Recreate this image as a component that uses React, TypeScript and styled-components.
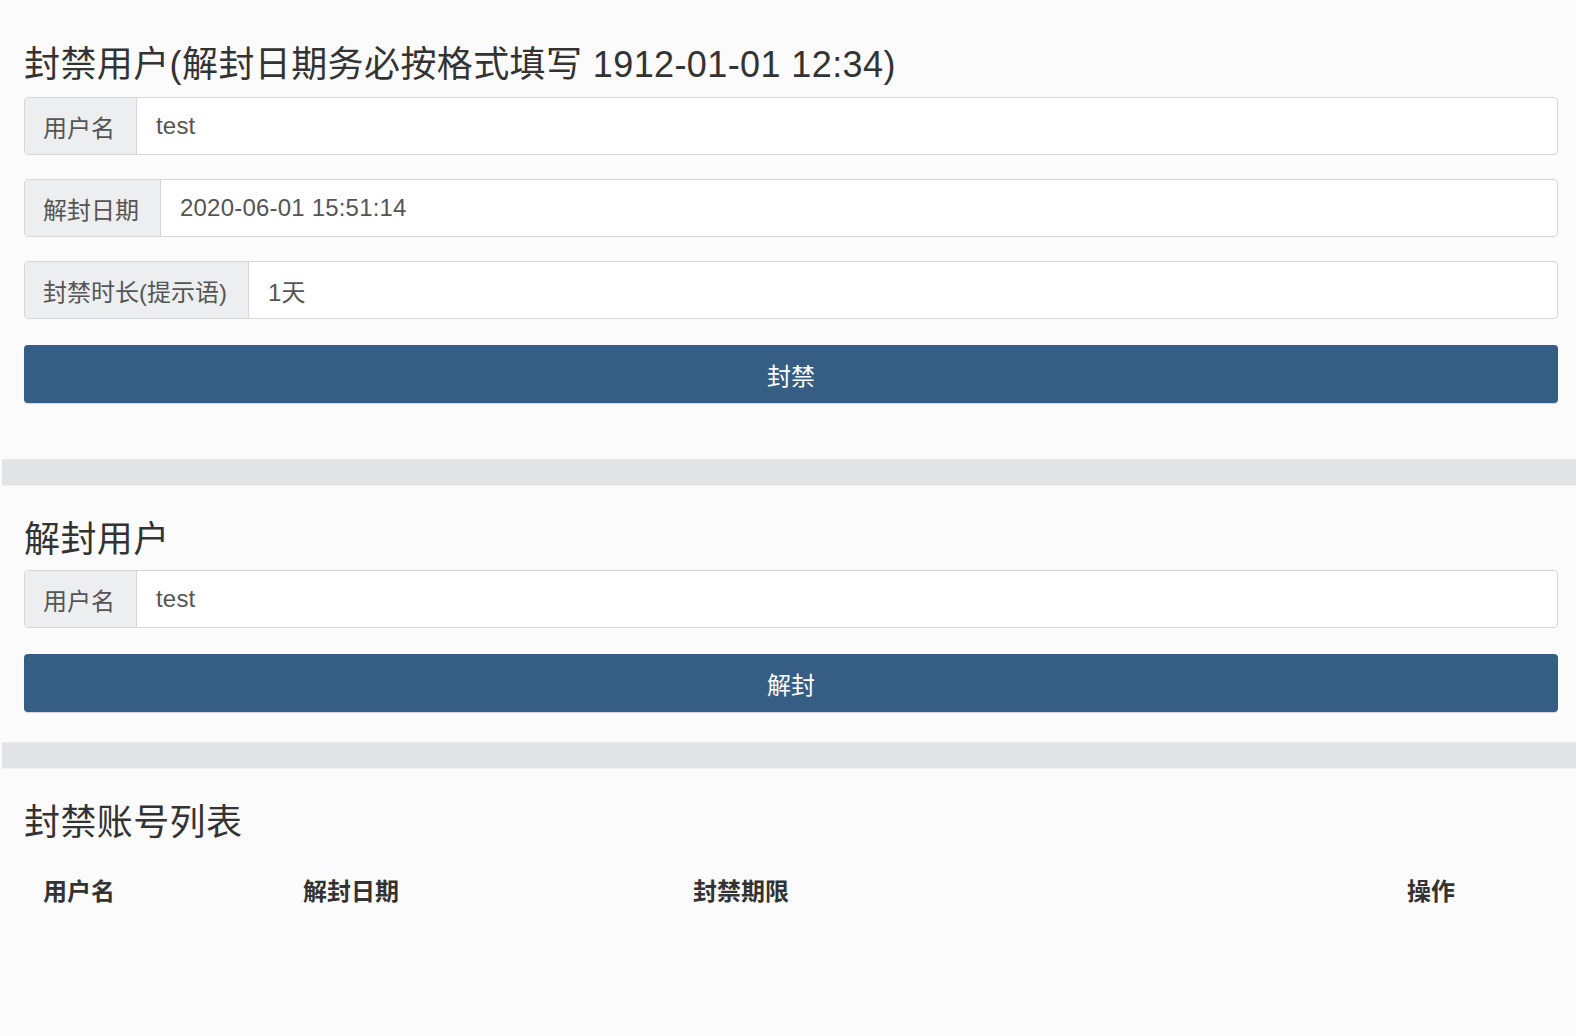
import React from "react";
import styled, { createGlobalStyle } from "styled-components";

const GlobalStyle = createGlobalStyle`
  html, body {
    margin: 0;
    padding: 0;
    background: #fbfbfb;
  }
  body {
    font-family: "Liberation Sans", "Noto Sans CJK SC", sans-serif;
    color: #333;
  }
  * { box-sizing: border-box; }
`;

const Page = styled.div`
  width: 1576px;
  min-height: 1036px;
  background: #fbfbfb;
  display: flex;
  flex-direction: column;
`;

const Section = styled.section<{ $top: number; $bottom: number }>`
  padding: ${(p) => p.$top}px 18px ${(p) => p.$bottom}px 24px;
  display: flex;
  flex-direction: column;
`;

const Separator = styled.div`
  height: 27px;
  background: #e2e4e6;
  border-top: 1px solid #e9eaec;
  border-bottom: 1px solid #eef0f1;
  margin-left: 2px;
`;

const Title = styled.h2<{ $gap?: number }>`
  margin: 0 0 ${(p) => p.$gap ?? 12}px 0;
  font-size: 36px;
  line-height: 40px;
  font-weight: 400;
  color: #333;
  letter-spacing: 0.4px;
  white-space: nowrap;
`;

const Fields = styled.div`
  display: flex;
  flex-direction: column;
  gap: 24px;
`;

const InputGroup = styled.div`
  display: flex;
  height: 58px;
  border: 1px solid #d6d6d6;
  border-radius: 4px;
  background: #fff;
  overflow: hidden;
`;

const Addon = styled.span`
  display: flex;
  align-items: center;
  padding: 0 21px 0 18px;
  background: #eceeef;
  border-right: 1px solid #d6d6d6;
  color: #555;
  font-size: 24px;
  white-space: nowrap;
`;

const Value = styled.span`
  display: flex;
  align-items: center;
  flex: 1;
  padding: 0 19px;
  color: #555;
  font-size: 24px;
  letter-spacing: 0.2px;
`;

const Button = styled.button`
  margin-top: 26px;
  height: 58px;
  width: 100%;
  border: none;
  border-radius: 4px;
  background: #365d84;
  color: #fff;
  font-family: inherit;
  font-size: 24px;
  box-shadow: 0 1px 1px rgba(0, 0, 0, 0.15);
  cursor: pointer;
`;

const Table = styled.div`
  display: grid;
  grid-template-columns: 260px 390px 714px 1fr;
  margin-top: 22px;
`;

const HeadCell = styled.div`
  padding: 12px 19px;
  font-size: 24px;
  line-height: 30px;
  font-weight: 700;
  color: #333;
`;

type Field = { label: string; value: string };

const Row = ({ label, value }: Field) => (
  <InputGroup>
    <Addon>{label}</Addon>
    <Value>{value}</Value>
  </InputGroup>
);

export default function App() {
  const banFields: Field[] = [
    { label: "用户名", value: "test" },
    { label: "解封日期", value: "2020-06-01 15:51:14" },
    { label: "封禁时长(提示语)", value: "1天" },
  ];
  return (
    <Page>
      <GlobalStyle />
      <Section $top={45} $bottom={56}>
        <Title>封禁用户(解封日期务必按格式填写 1912-01-01 12:34)</Title>
        <Fields>
          {banFields.map((f) => (
            <Row key={f.label} {...f} />
          ))}
        </Fields>
        <Button>封禁</Button>
      </Section>
      <Separator />
      <Section $top={34} $bottom={30}>
        <Title $gap={10}>解封用户</Title>
        <Fields>
          <Row label="用户名" value="test" />
        </Fields>
        <Button>解封</Button>
      </Section>
      <Separator />
      <Section $top={34} $bottom={40}>
        <Title $gap={0}>封禁账号列表</Title>
        <Table>
          <HeadCell>用户名</HeadCell>
          <HeadCell>解封日期</HeadCell>
          <HeadCell>封禁期限</HeadCell>
          <HeadCell>操作</HeadCell>
        </Table>
      </Section>
    </Page>
  );
}
